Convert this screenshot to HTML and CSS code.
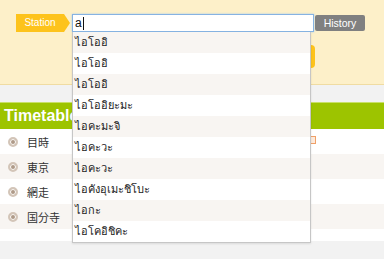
FILE: index.html
```html
<!DOCTYPE html>
<html>
<head>
<meta charset="utf-8">
<link rel="stylesheet" href="styles.css">
</head>
<body>
<div class="page">
  <div class="header">
    <div class="search-row">
      <div class="station-badge">Station</div>
      <div class="input-box"><span class="input-text">a</span><span class="caret"></span></div>
      <div class="history-btn">History</div>
    </div>
    <div class="search-btn">検索</div>
  </div>
  <div class="gap-band"></div>
  <div class="timetable-bar">Timetable</div>
  <div class="list">
    <div class="row"><span class="radio"></span><span class="name">目時</span><span class="tag"></span></div>
    <div class="row alt"><span class="radio"></span><span class="name">東京</span></div>
    <div class="row"><span class="radio"></span><span class="name">網走</span></div>
    <div class="row alt"><span class="radio"></span><span class="name">国分寺</span></div>
  </div>
  <div class="list-end"></div>

  <ul class="dropdown">
    <li>ไอโออิ</li>
    <li>ไอโออิ</li>
    <li>ไอโออิ</li>
    <li>ไอโออิยะมะ</li>
    <li>ไอคะมะจิ</li>
    <li>ไอคะวะ</li>
    <li>ไอคะวะ</li>
    <li>ไอคังอุเมะชิโบะ</li>
    <li>ไอกะ</li>
    <li>ไอโคอิชิคะ</li>
  </ul>
</div>
</body>
</html>
```

FILE: styles.css
```css
html, body {
  margin: 0;
  padding: 0;
}
body {
  font-family: "Liberation Sans", "Noto Sans CJK JP", sans-serif;
  background: #f2f2f2;
  width: 384px;
  height: 259px;
  overflow: hidden;
}
.page {
  position: relative;
  width: 384px;
  height: 259px;
}
.header {
  background: #fdf0c9;
  border-bottom: 1px solid #f0dca2;
  box-sizing: border-box;
  height: 85px;
  padding-top: 14px;
  padding-left: 16px;
}
.search-row {
  display: flex;
  align-items: flex-start;
  height: 18px;
}
.station-badge {
  position: relative;
  width: 48px;
  height: 18px;
  line-height: 18px;
  background: #fdc31c;
  color: #fff;
  font-size: 10px;
  text-align: center;
}
.station-badge::after {
  content: "";
  position: absolute;
  left: 48px;
  top: 0;
  border-left: 6px solid #fdc31c;
  border-top: 9px solid transparent;
  border-bottom: 9px solid transparent;
}
.input-box {
  margin-left: 8px;
  width: 242px;
  height: 18px;
  box-sizing: border-box;
  border: 1px solid #86b3e2;
  box-shadow: 0 0 2px #a9cbef;
  background: #fff;
  padding-left: 2px;
  display: flex;
  align-items: center;
}
.input-text {
  font-size: 12px;
  color: #111;
  line-height: 14px;
}
.caret {
  width: 1px;
  height: 13px;
  background: #111;
  margin-left: 1px;
}
.history-btn {
  margin-left: 1px;
  margin-top: 1px;
  width: 50px;
  height: 16px;
  line-height: 16px;
  background: #808080;
  border-radius: 2px;
  color: #fff;
  font-size: 10.5px;
  text-align: center;
}
.search-btn {
  margin-top: 13px;
  margin-left: 60px;
  width: 239px;
  height: 23px;
  line-height: 23px;
  background: #fdc31c;
  border-radius: 4px;
  color: #fff;
  font-size: 12px;
  text-align: center;
}
.gap-band {
  height: 17px;
  background: #f2f2f2;
}
.timetable-bar {
  height: 27px;
  box-sizing: border-box;
  border-top: 1px solid #c9e06a;
  background: #9dc400;
  color: #fff;
  font-weight: bold;
  font-size: 16px;
  line-height: 26px;
  padding-left: 4px;
}
.list {
  background: #fff;
}
.row {
  height: 25px;
  display: grid;
  grid-template-columns: 27px 270px 19px;
  align-items: center;
  background: #fff;
}
.row.alt {
  background: #f8f5f2;
}
.radio {
  width: 10px;
  height: 10px;
  box-sizing: border-box;
  border-radius: 50%;
  border: 2px solid #d3c5b8;
  background: #ae9a88;
  box-shadow: inset 0 0 0 1px #fbf8f5;
  margin-left: 8px;
}
.name {
  font-family: "Noto Sans CJK JP", sans-serif;
  font-size: 11px;
  color: #333;
}
.tag {
  width: 19px;
  height: 8px;
  box-sizing: border-box;
  border: 1px solid #f0a068;
  background: #fdeadb;
  margin-top: -3px;
}
.list-end {
  height: 12px;
  background: #fff;
}
.dropdown {
  position: absolute;
  left: 72px;
  top: 32px;
  width: 239px;
  margin: 0;
  padding: 0;
  list-style: none;
  box-sizing: border-box;
  border: 1px solid #c6c6c6;
  border-top: none;
  background: #fff;
  box-shadow: 0 1px 2px rgba(0,0,0,0.1);
}
.dropdown li {
  height: 21px;
  line-height: 21px;
  padding-left: 2px;
  font-size: 11px;
  color: #222;
  background: #fff;
  font-family: "Liberation Sans", sans-serif;
}
.dropdown li:nth-child(odd) {
  background: #f8f5f2;
}
```
